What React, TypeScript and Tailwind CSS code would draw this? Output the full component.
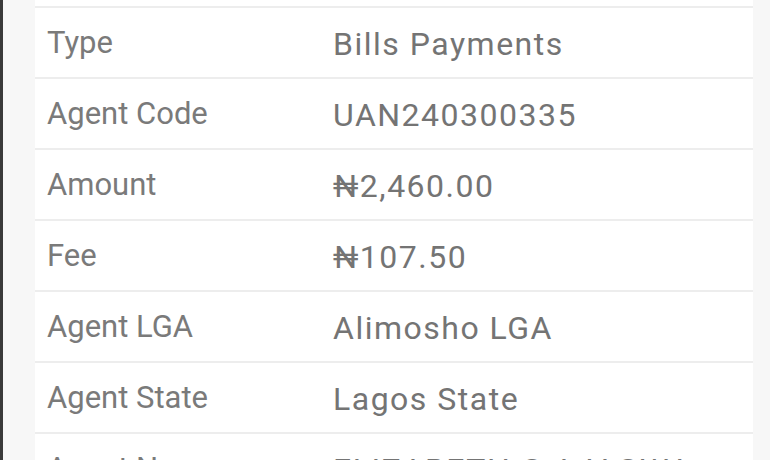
import React from "react";

const rows: [string, string][] = [
  ["Type", "Bills Payments"],
  ["Agent Code", "UAN240300335"],
  ["Amount", "₦2,460.00"],
  ["Fee", "₦107.50"],
  ["Agent LGA", "Alimosho LGA"],
  ["Agent State", "Lagos State"],
  ["Agent Name", "ELIZABETH G AJAGWA"],
];

export default function App() {
  return (
    <div
      className="flex h-[460px] w-[770px] overflow-hidden bg-[#f7f7f7]"
      style={{ fontFamily: "Roboto, 'Noto Sans', sans-serif" }}
    >
      <div className="w-[3px] shrink-0 bg-[#3a3a3a]" />
      <div className="flex-1 pl-[32px] pr-[17px]">
        <div className="bg-white">
          <div className="h-[8px] border-b-2 border-[#ededed]" />
          {rows.map(([k, v]) => (
            <div
              key={k}
              className="flex h-[71px] items-center border-b-2 border-[#ededed] leading-none"
            >
              <div className="w-[298px] shrink-0 pl-[12px] text-[31px] text-[#7a7a7a]">{k}</div>
              <div className="mt-[3px] text-[32px] tracking-[1.5px] text-[#747474]">{v}</div>
            </div>
          ))}
        </div>
      </div>
    </div>
  );
}
